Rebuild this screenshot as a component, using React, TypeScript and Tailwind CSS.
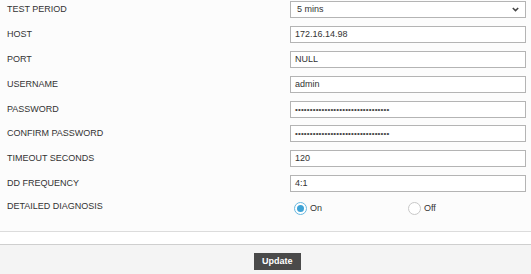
import { useState } from 'react';

const fields = [
  { label: 'HOST', value: '172.16.14.98', type: 'text', h: 'h-[25px]' },
  { label: 'PORT', value: 'NULL', type: 'text', h: 'h-[25px]' },
  { label: 'USERNAME', value: 'admin', type: 'text', h: 'h-[25px]' },
  { label: 'PASSWORD', value: '', type: 'password', h: 'h-[24px]' },
  { label: 'CONFIRM PASSWORD', value: '', type: 'password', h: 'h-[25px]' },
  { label: 'TIMEOUT SECONDS', value: '120', type: 'text', h: 'h-[25px]' },
  { label: 'DD FREQUENCY', value: '4:1', type: 'text', h: 'h-[25px]' },
];

function Radio({ checked, label, onClick }: { checked: boolean; label: string; onClick: () => void }) {
  return (
    <button type="button" onClick={onClick} className="flex items-center gap-[3px]">
      <span
        className={
          'flex h-[13px] w-[13px] items-center justify-center rounded-full border bg-white ' +
          (checked ? 'border-[#69b8e0]' : 'border-[#c8c8c8]')
        }
      >
        {checked && <span className="h-[7px] w-[7px] rounded-full bg-[#3ea3d6]" />}
      </span>
      <span className="text-[9px] text-[#333]">{label}</span>
    </button>
  );
}

export default function App() {
  const [dd, setDd] = useState(true);

  return (
    <div className="flex h-[274px] w-[531px] flex-col bg-white font-['Liberation_Sans',Arial,sans-serif] text-[9px] text-[#333]">
      <div className="flex flex-col bg-[#fcfcfc] pl-[7px] pr-[5px] pt-[1px]">
        <div className="flex h-[25px] items-start">
          <span className="flex h-[17px] w-[283px] items-center">TEST PERIOD</span>
          <div className="flex h-[17px] flex-1 items-center justify-between border border-[#b4b4b4] bg-white pl-[6px] pr-[6px]">
            <span>5 mins</span>
            <svg width="7" height="5" viewBox="0 0 7 5" fill="none">
              <path d="M0.8 1l2.7 2.6L6.2 1" stroke="#444" strokeWidth="1.5" />
            </svg>
          </div>
        </div>
        {fields.map((f) => (
          <div key={f.label} className={'flex items-start ' + f.h}>
            <span className="flex h-[17px] w-[283px] items-center">{f.label}</span>
            <div className="flex h-[17px] flex-1 items-center border border-[#b4b4b4] bg-white pl-[4px]">
              {f.type === 'password' ? (
                <span className="text-[8px] leading-none tracking-[0.15px] text-[#444]">
                  {'•'.repeat(32)}
                </span>
              ) : (
                <span>{f.value}</span>
              )}
            </div>
          </div>
        ))}
        <div className="flex h-[25px] items-start">
          <span className="flex h-[14px] w-[283px] items-center">DETAILED DIAGNOSIS</span>
          <div className="flex flex-1 items-center pt-[2px] pl-[4px]">
            <div className="w-[114px]">
              <Radio checked={dd} label="On" onClick={() => setDd(true)} />
            </div>
            <Radio checked={!dd} label="Off" onClick={() => setDd(false)} />
          </div>
        </div>
        <div className="h-[6px]" />
      </div>
      <div className="h-[13px] border-t border-[#dcdcdc] bg-white" />
      <div className="flex flex-1 items-start border-t border-[#cfcfcf] bg-[#f4f4f4] pl-[254px] pt-[8px]">
        <button
          type="button"
          className="h-[17px] bg-[#4a4a4a] px-[8px] text-[9px] font-bold leading-[17px] text-white"
        >
          Update
        </button>
      </div>
    </div>
  );
}
